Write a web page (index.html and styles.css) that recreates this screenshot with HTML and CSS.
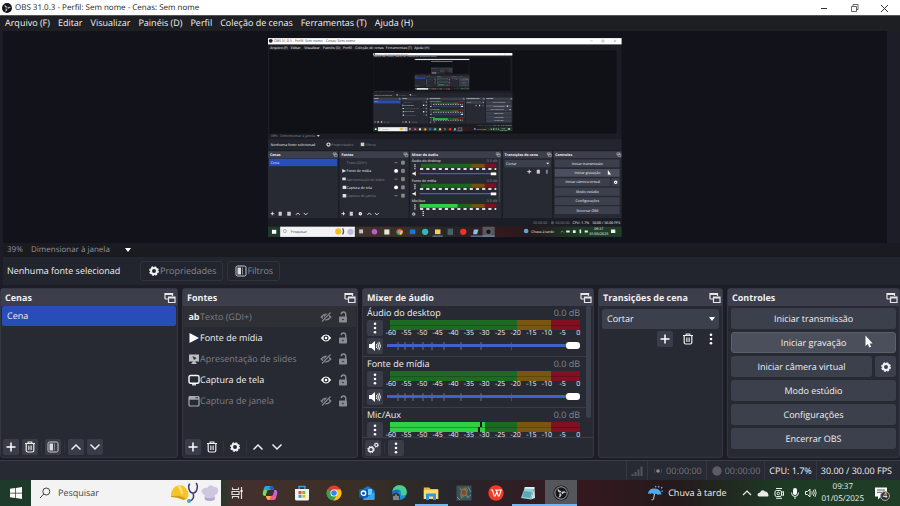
FILE: index.html
```html
<!DOCTYPE html>
<html lang="pt-BR">
<head>
<meta charset="UTF-8" />
<meta name="viewport" content="width=device-width, initial-scale=1" />
<title>OBS 31.0.3</title>
<link rel="stylesheet" href="styles.css">
</head>
<body>

<!-- icon sprites -->
<svg class="sprites" aria-hidden="true">
  <defs>
    <symbol id="obs" viewBox="0 0 16 16">
      <circle cx="8" cy="8" r="7.6" fill="#15151a"/>
      <circle cx="8" cy="8" r="6.2" fill="none" stroke="#c9c9cd" stroke-width=".8"/>
      <path d="M7.6 7.7C5 7.500 4 5.500 5.200 3.300c.2 2 1.600 2.500 3 2.800zM8.300 7.500c1.500-2 3.800-1.600 4.900.4-1.800-.7-2.900.2-3.800 1.300zM8 8.400c1.100 2.300-.3 4-2.700 4 1.500-1.100 1.300-2.400.8-3.800z" fill="#c9c9cd"/>
    </symbol>
    <symbol id="obs-small" viewBox="0 0 12 12">
      <circle cx="6" cy="6" r="5" fill="#15151a"/>
      <path d="M5.500 5.800C3.800 5.500 3 4 4 2.200c.3 1.700 1.300 2 2.400 2.300zM6.300 5.600c1.200-1.500 2.800-1 3.600.5-1.500-.5-2.200.2-2.800 1zM6 6.500c.8 1.800-.5 3.200-2.300 3 1.200-.8 1-1.700.7-2.700z" fill="#b5b5ba"/>
    </symbol>
    <symbol id="popout" viewBox="0 0 12 12">
      <path d="M1 7V1.500h7.500V4M1 2.300h7.500M1 7h3" fill="none" stroke="#e6e6ea" stroke-width="1.200"/>
      <path d="M4.500 5h6.500v5.500H4.500zM4.500 6h6.500" fill="none" stroke="#e6e6ea" stroke-width="1.200"/>
    </symbol>
    <symbol id="plus" viewBox="0 0 12 12"><path d="M6 1.500v9M1.500 6h9" stroke="#fff" stroke-width="1.500"/></symbol>
    <symbol id="trash" viewBox="0 0 12 12">
      <path d="M1 2.500h10M4.200 2.300V1h3.600v1.300M2.200 3v6.500q0 1.500 1.500 1.500h4.600q1.500 0 1.500-1.500V3" fill="none" stroke="#eee" stroke-width="1.200"/>
      <path d="M4.600 4.500v4.500M6 4.500v4.500M7.400 4.500v4.500" stroke="#eee" stroke-width=".8"/>
    </symbol>
    <symbol id="filter" viewBox="0 0 12 12">
      <rect x="1" y="1" width="10" height="10" rx="1.500" fill="none" stroke="#c8c8ce" stroke-width="1"/>
      <path d="M2.500 2.500h3.500v7H2.500z" fill="#dcdce0"/>
      <path d="M7 2.500h1v7H7z" fill="#85858d"/>
    </symbol>
    <symbol id="up" viewBox="0 0 12 12"><path d="M1.500 8.500L6 4l4.500 4.500" fill="none" stroke="#eee" stroke-width="1.500"/></symbol>
    <symbol id="down" viewBox="0 0 12 12"><path d="M1.500 3.500L6 8l4.500-4.500" fill="none" stroke="#eee" stroke-width="1.500"/></symbol>
    <symbol id="gear" viewBox="0 0 12 12">
      <circle cx="6" cy="6" r="3" fill="none" stroke="#f0f0f2" stroke-width="2"/>
      <circle cx="6" cy="6" r="4.200" fill="none" stroke="#f0f0f2" stroke-width="1.400" stroke-dasharray="1.900 1.399"/>
    </symbol>
    <symbol id="gears" viewBox="0 0 12 12">
      <circle cx="4" cy="7.500" r="2.300" fill="none" stroke="#f0f0f2" stroke-width="1.400"/>
      <circle cx="4" cy="7.500" r="3.300" fill="none" stroke="#f0f0f2" stroke-width="1" stroke-dasharray="1.300 1.290"/>
      <circle cx="9.300" cy="3" r="1.500" fill="none" stroke="#f0f0f2" stroke-width="1.200"/>
      <circle cx="9.300" cy="3" r="2.200" fill="none" stroke="#f0f0f2" stroke-width=".8" stroke-dasharray=".9 .828"/>
    </symbol>
    <symbol id="dots" viewBox="0 0 12 12"><circle cx="6" cy="1.800" r="1.300" fill="#fff"/><circle cx="6" cy="6" r="1.300" fill="#fff"/><circle cx="6" cy="10.200" r="1.300" fill="#fff"/></symbol>
    <symbol id="speaker" viewBox="0 0 12 12">
      <path d="M0 4h2.500L6 1v10L2.500 8H0z" fill="#fff"/>
      <path d="M7.300 4q1.300 2 0 4M8.600 2.800q2.300 3.200 0 6.400M10 1.800q3 4.200 0 8.400" fill="none" stroke="#fff" stroke-width=".9"/>
    </symbol>
    <symbol id="eye" viewBox="0 0 12 12">
      <path d="M.8 6Q6-.8 11.200 6 6 12.800.8 6z" fill="#fff"/>
      <circle cx="6" cy="6" r="2.500" fill="#272a33"/><circle cx="6" cy="6" r="1.300" fill="#fff"/>
    </symbol>
    <symbol id="eye-off" viewBox="0 0 12 12">
      <path d="M1.300 6Q6 .2 10.700 6 6 11.800 1.300 6z" fill="none" stroke="#85868c" stroke-width="1.400"/>
      <path d="M4.500 6.800a1.800 1.800 0 0 1 2-2.500" fill="none" stroke="#85868c" stroke-width="1.400"/>
      <path d="M1.500 10.800L10.500 1.200" stroke="#272a33" stroke-width="2.500"/><path d="M2 10.500L10.500 1.500" stroke="#85868c" stroke-width="1.200"/>
    </symbol>
    <symbol id="lock" viewBox="0 0 12 12">
      <rect x="2" y="5.500" width="8" height="6" rx=".8" fill="#8b8c91"/>
      <path d="M4.300 3.300Q4.300 1 6.500 1t2.200 2.300V6" fill="none" stroke="#8b8c91" stroke-width="1.400"/>
      <circle cx="6" cy="8.500" r=".8" fill="#272a33"/>
    </symbol>
    <symbol id="play" viewBox="0 0 12 12"><path d="M1.500 1L11 6l-9.500 5z" fill="#fff"/></symbol>
    <symbol id="slides" viewBox="0 0 12 12"><path d="M1 1.500h10v7H7l2 2.500H3l2-2.500H1z" fill="#bcbdc2"/><path d="M4.500 3l4 2-2.500 2z" fill="#272a33"/></symbol>
    <symbol id="monitor" viewBox="0 0 12 12"><rect x="1" y="1.500" width="10" height="7.800" rx="1.500" fill="none" stroke="#fff" stroke-width="1.400"/><path d="M4 10.800h4" stroke="#fff" stroke-width="1.200"/></symbol>
    <symbol id="window" viewBox="0 0 12 12"><rect x="1" y="1.500" width="10" height="9.500" rx="1" fill="none" stroke="#a9aab0" stroke-width="1.200"/><path d="M1 1.500h10v3.200H1z" fill="#a9aab0"/><path d="M7.500 2.800h2.500" stroke="#272a33"/></symbol>

    <!-- the desktop, as the display capture sees it -->
    <g id="desktop">
      <rect width="900" height="506" fill="#1c1d24"/>
      <rect width="900" height="16" fill="#fff"/>
      <circle cx="7" cy="7" r="5" fill="#222"/>
      <text x="15" y="11" class="cap dark">OBS 31.0.3 - Perfil: Sem nome - Cenas: Sem nome</text>
      <path d="M820 7h6M850 5h5v5h-5zM880 4l6 6M886 4l-6 6" stroke="#777" fill="none"/>
      <text x="5" y="27" class="cap">Arquivo (F)</text><text x="58" y="27" class="cap">Editar</text>
      <text x="92" y="27" class="cap">Visualizar</text><text x="140" y="27" class="cap">Painéis (D)</text>
      <text x="191" y="27" class="cap">Perfil</text><text x="222" y="27" class="cap">Coleção de cenas</text>
      <text x="300" y="27" class="cap">Ferramentas (T)</text><text x="372" y="27" class="cap">Ajuda (H)</text>
      <rect x="3" y="31" width="884" height="212" fill="#101117"/>
      <rect x="0" y="257" width="900" height="28" fill="#22252d"/>
      <text x="7" y="252" class="cap dim">39%</text><text x="31" y="252" class="cap dim">Dimensionar à janela</text>
      <path d="M124 247h8l-4 4z" fill="#fff"/>
      <text x="7" y="275" class="cap">Nenhuma fonte selecionad</text>
      <circle cx="154" cy="271" r="4" fill="none" stroke="#ddd" stroke-width="3"/><text x="161" y="275" class="cap dim">Propriedades</text>
      <path d="M236 266h9v9h-9z" fill="#ccc"/><text x="248" y="275" class="cap dim">Filtros</text>
      <path d="M0 288h178v170H0zM182 288h176v170H182zM362 288h232v170H362zM598 288h125v170H598zM727 288h173v170H727z" fill="#272a33"/>
      <path d="M0 288h178v17H0zM182 288h176v17H182zM362 288h232v17H362zM598 288h125v17H598zM727 288h173v17H727z" fill="#3c3e4b"/>
      <text x="5" y="300" class="cap bold">Cenas</text><text x="187" y="300" class="cap bold">Fontes</text>
      <text x="366" y="300" class="cap bold">Mixer de áudio</text><text x="602" y="300" class="cap bold">Transições de cena</text>
      <text x="731" y="300" class="cap bold">Controles</text>
      <path d="M166 292h7v5h-7zM169 295h7v6h-7zM346 292h7v5h-7zM349 295h7v6h-7zM581 292h7v5h-7zM584 295h7v6h-7zM711 292h7v5h-7zM714 295h7v6h-7zM888 292h7v5h-7zM891 295h7v6h-7z" fill="none" stroke="#eee"/>
      <rect x="3" y="307" width="173" height="19" fill="#284cb8"/>
      <text x="7" y="320" class="cap">Cena</text>
      <text x="200" y="321" class="cap dim">Texto (GDI+)</text><text x="200" y="342" class="cap">Fonte de mídia</text>
      <text x="200" y="363" class="cap dim">Apresentação de slides</text><text x="200" y="384" class="cap">Captura de tela</text>
      <text x="200" y="405" class="cap dim">Captura de janela</text>
      <path d="M189 333l10 5-10 5zM189 355h9v7h-9zM190 376h9v8h-9zM190 397h9v9h-9z" fill="#ddd"/>
      <path d="M322 317h8M322 359h8M322 401h8M340 313h7v8h-7zM340 334h7v8h-7zM340 355h7v8h-7zM340 376h7v8h-7zM340 397h7v8h-7z" fill="#888" stroke="#888" stroke-width="2"/>
      <circle cx="326" cy="338" r="5" fill="#fff"/><circle cx="326" cy="380" r="5" fill="#fff"/>
      <g id="cap-track">
        <text x="366" y="316" class="cap">Áudio do desktop</text><text x="557" y="316" class="cap dim">0.0 dB</text>
        <path d="M389 320h128v10H389z" fill="#1c6420"/><path d="M517 320h35v10h-35z" fill="#73520f"/><path d="M552 320h29v10h-29z" fill="#7c0f21"/>
        <path d="M387 333h194" stroke="#ddd" stroke-width="5" stroke-dasharray="8 7.800"/>
        <path d="M386 345h182" stroke="#3d62c9" stroke-width="3"/><rect x="567" y="342" width="14" height="7" fill="#fff"/>
        <path d="M374 321v13" stroke="#fff" stroke-width="3" stroke-dasharray="3 2"/><path d="M368 343h4l4-4v12l-4-4h-4z" fill="#fff"/>
      </g>
      <text x="366" y="367" class="cap">Fonte de mídia</text><text x="557" y="367" class="cap dim">0.0 dB</text>
      <path d="M389 371h128v10H389z" fill="#1c6420"/><path d="M517 371h35v10h-35zM517 422h35v10h-35z" fill="#73520f"/><path d="M552 371h29v10h-29zM552 422h29v10h-29z" fill="#7c0f21"/>
      <path d="M387 384h194M387 435h194" stroke="#ddd" stroke-width="5" stroke-dasharray="8 7.800"/>
      <path d="M386 396h182" stroke="#3d62c9" stroke-width="3"/><rect x="567" y="393" width="14" height="7" fill="#fff"/>
      <path d="M374 372v13M374 423v13M395 440v13" stroke="#fff" stroke-width="3" stroke-dasharray="3 2"/><path d="M368 394h4l4-4v12l-4-4h-4z" fill="#fff"/>
      <text x="366" y="418" class="cap">Mic/Aux</text><text x="557" y="418" class="cap dim">0.0 dB</text>
      <path d="M386 422h97v10h-97z" fill="#2fd046"/><path d="M483 422h34v10h-34z" fill="#1c6420"/>
      <path d="M587 307h4v110h-4z" fill="#3c404d"/>
      <path d="M602 310h117v19H602zM730 309h165v20H730zM730 357h141v20H730zM874 357h21v20h-21zM730 381h165v20H730zM730 405h165v20H730zM730 428h165v20H730z" fill="#3c404d"/>
      <path d="M730 333h165v20H730z" fill="#4b4f5d"/>
      <text x="606" y="323" class="cap">Cortar</text><path d="M708 317h8l-4 4z" fill="#fff"/>
      <path d="M665 335v10M660 340h10M710 335v10" stroke="#fff" stroke-width="2"/><path d="M684 335h8v10h-8z" fill="#ccc"/>
      <text x="813" y="323" class="cap mid">Iniciar transmissão</text><text x="813" y="347" class="cap mid">Iniciar gravação</text>
      <text x="801" y="370" class="cap mid">Iniciar câmera virtual</text><text x="813" y="395" class="cap mid">Modo estúdio</text>
      <text x="813" y="418" class="cap mid">Configurações</text><text x="813" y="442" class="cap mid">Encerrar OBS</text>
      <circle cx="885" cy="367" r="3" fill="none" stroke="#fff" stroke-width="3"/>
      <path d="M865 336v13l3-3 3 4 1-5z" fill="#fff"/>
      <path d="M7 447h9M11 442v9M187 447h9M192 442v9M71 450l5-5 5 5M91 445l5 5 5-5M253 450l5-5 5 5M272 445l5 5 5-5" fill="none" stroke="#fff" stroke-width="2"/>
      <path d="M27 442h8v10h-8zM49 442h9v10h-9zM208 442h8v10h-8z" fill="#ccc"/>
      <circle cx="235" cy="447" r="3" fill="none" stroke="#fff" stroke-width="3"/><circle cx="371" cy="448" r="3" fill="none" stroke="#fff" stroke-width="2"/>
      <circle cx="724" cy="470" r="4" fill="#555"/>
      <text x="675" y="473" class="cap dim">00:00:00</text><text x="732" y="473" class="cap dim">00:00:00</text>
      <text x="775" y="473" class="cap">CPU: 1.7%</text><text x="825" y="473" class="cap">30.00 / 30.00 FPS</text>
      <rect y="480" width="900" height="26" fill="url(#bar)"/>
      <rect x="31" y="480" width="190" height="26" fill="#f3f3f3"/><rect x="10" y="488" width="11" height="10" fill="#fff"/>
      <text x="58" y="496" class="cap dark">Pesquisar</text>
      <circle cx="43" cy="491" r="4" fill="none" stroke="#555"/>
      <circle cx="179" cy="492" r="8" fill="#f3c022"/><path d="M190 484q5 8 0 16" fill="none" stroke="#5a4a8a" stroke-width="3"/><circle cx="210" cy="493" r="8" fill="#c5bcdc"/>
      <path d="M232 487h10v10h-10z" fill="#c8c4c4"/><circle cx="271" cy="493" r="7" fill="#bd5ec5"/><path d="M296 487h13v13h-13z" fill="#e5e5da"/>
      <circle cx="335" cy="493" r="8" fill="#e34b36"/><path d="M335 493l7-4a8 8 0 0 1-7 12z" fill="#fbc116"/><path d="M335 493v8a8 8 0 0 1-7-12z" fill="#2da44e"/><circle cx="335" cy="493" r="3" fill="#4a8df0" stroke="#fff"/><path d="M361 487h14v12h-14z" fill="#1877d2"/>
      <circle cx="400" cy="493" r="8" fill="#2cbcc0"/><path d="M425 487h14v12h-14z" fill="#f6cd56"/><path d="M457 485h14v16h-14z" fill="#466267"/>
      <circle cx="497" cy="493" r="8" fill="#f03424"/><path d="M524 487h12l-4 12h-10z" fill="#87c7cf"/>
      <path d="M546 480h31v26h-31z" fill="#55565c"/><circle cx="561" cy="493" r="7" fill="#17171a" stroke="#bbb"/>
      <path d="M419 504h26M516 504h61" stroke="#7ab4ec" stroke-width="2"/>
      <circle cx="657" cy="491" r="6" fill="#58a6e0"/>
      <text x="670" y="496" class="cap">Chuva à tarde</text><text x="842" y="489" class="cap mid">09:37</text><text x="842" y="502" class="cap mid">01/05/2025</text>
      <path d="M745 495l4-4 4 4" fill="none" stroke="#eee"/><path d="M759 490h9v5h-9zM776 489h7v7h-7zM793 487h4v10h-4zM806 490h8v5h-8zM873 487h11v9h-11z" fill="#eee"/>
    </g>
    <linearGradient id="bar">
      <stop offset="0" stop-color="#1d3a2b"/><stop offset=".24" stop-color="#1f3628"/><stop offset=".26" stop-color="#43302e"/>
      <stop offset=".4" stop-color="#382f26"/><stop offset=".5" stop-color="#27262b"/><stop offset=".64" stop-color="#35191f"/>
      <stop offset=".75" stop-color="#24191c"/><stop offset=".87" stop-color="#1d3a24"/><stop offset="1" stop-color="#1f3d27"/>
    </linearGradient>
  </defs>
</svg>

<header class="titlebar">
  <svg class="icon"><use href="#obs-small"/></svg>
  <h1>OBS 31.0.3 - Perfil: Sem nome - Cenas: Sem nome</h1>
  <div class="window-buttons">
    <button aria-label="Minimizar"><svg viewBox="0 0 10 10"><path d="M2 5.500h6" stroke="#333"/></svg></button>
    <button aria-label="Restaurar"><svg viewBox="0 0 10 10"><path d="M2.500 3.500h5v5h-5zM4 3.500v-2h5v5H7.500" fill="none" stroke="#444" stroke-width=".8"/></svg></button>
    <button aria-label="Fechar"><svg viewBox="0 0 10 10"><path d="M2 2l7 7M9 2L2 9" stroke="#333"/></svg></button>
  </div>
</header>

<nav class="menubar">
  <a href="#">Arquivo (F)</a>
  <a href="#">Editar</a>
  <a href="#">Visualizar</a>
  <a href="#">Painéis (D)</a>
  <a href="#">Perfil</a>
  <a href="#">Coleção de cenas</a>
  <a href="#">Ferramentas (T)</a>
  <a href="#">Ajuda (H)</a>
</nav>

<main class="preview">
  <svg viewBox="0 0 900 506" role="img" aria-label="Captura de tela">
    <use href="#desktop"/>
    <g transform="translate(268 38) scale(.3933)">
      <use href="#desktop"/>
      <g transform="translate(268 38) scale(.3933)">
        <use href="#desktop"/>
        <use href="#desktop" transform="translate(268 38) scale(.3933)"/>
      </g>
    </g>
  </svg>
</main>

<div class="scalebar">
  <span class="percent">39%</span>
  <select aria-label="Escala da prévia"><option>Dimensionar à janela</option></select>
</div>

<div class="source-toolbar">
  <span class="selected-source">Nenhuma fonte selecionad</span>
  <button class="tool"><svg class="icon"><use href="#gear"/></svg>Propriedades</button>
  <button class="tool"><svg class="icon"><use href="#filter"/></svg>Filtros</button>
</div>

<div class="docks">
  <section class="dock">
    <header><h2>Cenas</h2><button class="popout" aria-label="Destacar Cenas"><svg class="icon"><use href="#popout"/></svg></button></header>
    <ul class="scenes">
      <li class="active">Cena</li>
    </ul>
    <footer>
      <button class="small filled" aria-label="Adicionar cena"><svg class="icon"><use href="#plus"/></svg></button>
      <button class="small filled" aria-label="Remover cena"><svg class="icon"><use href="#trash"/></svg></button>
      <i class="divider"></i>
      <button class="small filled" aria-label="Filtros da cena"><svg class="icon"><use href="#filter"/></svg></button>
      <i class="divider"></i>
      <button class="small filled" aria-label="Mover cena para cima"><svg class="icon"><use href="#up"/></svg></button>
      <button class="small filled" aria-label="Mover cena para baixo"><svg class="icon"><use href="#down"/></svg></button>
    </footer>
  </section>

  <section class="dock">
    <header><h2>Fontes</h2><button class="popout" aria-label="Destacar Fontes"><svg class="icon"><use href="#popout"/></svg></button></header>
    <ul class="sources">
      <li class="off hover"><b class="ab">ab</b><span>Texto (GDI+)</span>
        <button aria-label="Mostrar"><svg class="icon"><use href="#eye-off"/></svg></button><button aria-label="Travar"><svg class="icon"><use href="#lock"/></svg></button></li>
      <li><svg class="icon"><use href="#play"/></svg><span>Fonte de mídia</span>
        <button aria-label="Ocultar"><svg class="icon"><use href="#eye"/></svg></button><button aria-label="Travar"><svg class="icon"><use href="#lock"/></svg></button></li>
      <li class="off"><svg class="icon"><use href="#slides"/></svg><span>Apresentação de slides</span>
        <button aria-label="Mostrar"><svg class="icon"><use href="#eye-off"/></svg></button><button aria-label="Travar"><svg class="icon"><use href="#lock"/></svg></button></li>
      <li><svg class="icon"><use href="#monitor"/></svg><span>Captura de tela</span>
        <button aria-label="Ocultar"><svg class="icon"><use href="#eye"/></svg></button><button aria-label="Travar"><svg class="icon"><use href="#lock"/></svg></button></li>
      <li class="off"><svg class="icon"><use href="#window"/></svg><span>Captura de janela</span>
        <button aria-label="Mostrar"><svg class="icon"><use href="#eye-off"/></svg></button><button aria-label="Travar"><svg class="icon"><use href="#lock"/></svg></button></li>
    </ul>
    <footer>
      <button class="small filled" aria-label="Adicionar fonte"><svg class="icon"><use href="#plus"/></svg></button>
      <button class="small" aria-label="Remover fonte"><svg class="icon"><use href="#trash"/></svg></button>
      <i class="divider"></i>
      <button class="small" aria-label="Propriedades da fonte"><svg class="icon"><use href="#gear"/></svg></button>
      <i class="divider"></i>
      <button class="small" aria-label="Mover fonte para cima"><svg class="icon"><use href="#up"/></svg></button>
      <button class="small" aria-label="Mover fonte para baixo"><svg class="icon"><use href="#down"/></svg></button>
    </footer>
  </section>

  <section class="dock">
    <header><h2>Mixer de áudio</h2><button class="popout" aria-label="Destacar Mixer"><svg class="icon"><use href="#popout"/></svg></button></header>
    <div class="mixer">
      <div class="channels">
        <div class="channel">
          <div class="channel-name"><label for="vol1">Áudio do desktop</label><output>0.0 dB</output></div>
          <div class="channel-body">
            <div class="channel-buttons">
              <button class="small filled" aria-label="Opções"><svg class="icon"><use href="#dots"/></svg></button>
              <button class="small filled" aria-label="Mudo"><svg class="icon"><use href="#speaker"/></svg></button>
            </div>
            <div class="levels">
              <div class="meter"></div>
              <div class="scale"><span>-60</span><span>-55</span><span>-50</span><span>-45</span><span>-40</span><span>-35</span><span>-30</span><span>-25</span><span>-20</span><span>-15</span><span>-10</span><span>-5</span><span>0</span></div>
              <input type="range" id="vol1" value="100">
            </div>
          </div>
        </div>
        <div class="channel">
          <div class="channel-name"><label for="vol2">Fonte de mídia</label><output>0.0 dB</output></div>
          <div class="channel-body">
            <div class="channel-buttons">
              <button class="small filled" aria-label="Opções"><svg class="icon"><use href="#dots"/></svg></button>
              <button class="small filled" aria-label="Mudo"><svg class="icon"><use href="#speaker"/></svg></button>
            </div>
            <div class="levels">
              <div class="meter"></div>
              <div class="scale"><span>-60</span><span>-55</span><span>-50</span><span>-45</span><span>-40</span><span>-35</span><span>-30</span><span>-25</span><span>-20</span><span>-15</span><span>-10</span><span>-5</span><span>0</span></div>
              <input type="range" id="vol2" value="100">
            </div>
          </div>
        </div>
        <div class="channel">
          <div class="channel-name"><label for="vol3">Mic/Aux</label><output>0.0 dB</output></div>
          <div class="channel-body">
            <div class="channel-buttons">
              <button class="small filled" aria-label="Opções"><svg class="icon"><use href="#dots"/></svg></button>
              <button class="small filled" aria-label="Mudo"><svg class="icon"><use href="#speaker"/></svg></button>
            </div>
            <div class="levels">
              <div class="meter"><div class="level" style="width: 50%"></div></div>
              <div class="scale"><span>-60</span><span>-55</span><span>-50</span><span>-45</span><span>-40</span><span>-35</span><span>-30</span><span>-25</span><span>-20</span><span>-15</span><span>-10</span><span>-5</span><span>0</span></div>
              <input type="range" id="vol3" value="100">
            </div>
          </div>
        </div>
      </div>
      <div class="scrollbar"></div>
    </div>
    <footer class="lined">
      <button class="small filled" aria-label="Propriedades de áudio"><svg class="icon"><use href="#gears"/></svg></button>
      <i class="divider"></i>
      <button class="small filled" aria-label="Menu do mixer"><svg class="icon"><use href="#dots"/></svg></button>
    </footer>
  </section>

  <section class="dock">
    <header><h2>Transições de cena</h2><button class="popout" aria-label="Destacar Transições"><svg class="icon"><use href="#popout"/></svg></button></header>
    <div class="transitions">
      <select aria-label="Transição"><option>Cortar</option></select>
      <div class="transition-buttons">
        <button class="small filled" aria-label="Adicionar transição"><svg class="icon"><use href="#plus"/></svg></button>
        <button class="small" aria-label="Remover transição"><svg class="icon"><use href="#trash"/></svg></button>
        <button class="small" aria-label="Opções da transição"><svg class="icon"><use href="#dots"/></svg></button>
      </div>
    </div>
  </section>

  <section class="dock">
    <header><h2>Controles</h2><button class="popout" aria-label="Destacar Controles"><svg class="icon"><use href="#popout"/></svg></button></header>
    <div class="controls">
      <button>Iniciar transmissão</button>
      <button class="hover">Iniciar gravação
        <svg class="cursor" viewBox="0 0 8 13"><path d="M.5.500v10.500l2.300-2 1.600 3.500 1.700-.8-1.500-3.200h3z" fill="#fff"/></svg>
      </button>
      <div class="split"><button>Iniciar câmera virtual</button><button aria-label="Configurar câmera virtual"><svg class="icon"><use href="#gear"/></svg></button></div>
      <button>Modo estúdio</button>
      <button>Configurações</button>
      <button>Encerrar OBS</button>
    </div>
  </section>
</div>

<div class="statusbar">
  <span><svg class="icon" viewBox="0 0 12 12"><path d="M1.500 9v2M4.500 7v4M7.500 4.500V11M10.500 1.500V11" stroke="#55575f" stroke-width="2"/></svg></span>
  <span class="idle"><svg class="icon" viewBox="0 0 12 12"><circle cx="6" cy="6" r="1.800" fill="#888a90"/><path d="M3 3.500q-1.500 2.500 0 5M9 3.500q1.500 2.500 0 5" fill="none" stroke="#44464e"/></svg>00:00:00</span>
  <span class="idle"><svg class="icon" viewBox="0 0 12 12"><circle cx="6" cy="6" r="4.700" fill="#5c5d64"/></svg>00:00:00</span>
  <span>CPU: 1.7%</span>
  <span>30.00 / 30.00 FPS</span>
</div>

<div class="taskbar">
  <button class="start" aria-label="Iniciar"><svg viewBox="0 0 12 12"><path d="M0 1.800L5.300 1v4.700H0zM6 .9L12 0v5.700H6zM0 6.400h5.300v4.700L0 10.300zM6 6.400h6V12l-6-.9z" fill="#fff"/></svg></button>
  <div class="search">
    <svg class="lens" viewBox="0 0 12 12"><circle cx="7.300" cy="4.500" r="3.500" fill="none" stroke="#444"/><path d="M4.800 7L1 11" stroke="#444"/></svg>
    <input type="text" placeholder="Pesquisar" aria-label="Pesquisar">
    <svg class="doodle" viewBox="0 0 48 22">
      <path d="M0 14Q0 4 9 3q8 1 8.500 11l-2 3Q8 12 0 14z" fill="#f5c425"/><path d="M6 4l3-1q3 4 3 9l-2 0q-1-5-4-8z" fill="#ffe17a"/><path d="M0 14q9-2 15.500 3l-3 1Q6 15 0 15z" fill="#d69b10"/>
      <path d="M19 2q-2 1-1 5 1 4 4 4t4-4q1-4-1-6M22 11q2 6-3 8" fill="none" stroke="#423a78" stroke-width="1.500"/><circle cx="18" cy="19" r="2" fill="#4aa5bd"/>
      <path d="M32 12q-3-3 0-5 2-2 4-1 3-5 7-1 5 0 4 5-1 3-3 3l-.5 4q-5 2.500-9.500 0l-.5-4z" fill="#cfc7e2"/><path d="M33.500 15q5 2.500 10.500 0l-.5 3q-5 2-9.500 0z" fill="#b4a9cc"/>
    </svg>
  </div>
  <div class="apps">
    <button aria-label="Visão de tarefas"><svg viewBox="0 0 16 16"><path d="M3.500 2.500v2h6v-2M3.500 13.500v-2h6v2M3 6.500h7v3H3zM12.500 2v12" fill="none" stroke="#ddd" stroke-width="1.200"/><path d="M11.500 5h2v2h-2z" fill="#fff"/></svg></button>
    <button aria-label="Copilot"><svg viewBox="0 0 16 16"><path d="M4 1h5q2 0 2.500 2l.5 2H7Q5 5 4.500 7L3.500 11Q0 11 1 7l1-4Q2.500 1 4 1z" fill="#25a5e8"/><path d="M1 7l1-2q3-1 3 1l-1.500 5Q0 11 1 7z" fill="#8bd448"/><path d="M9 1q2 0 2.500 2l.7 2h-3L7 3z" fill="#3451cf"/><path d="M12 15H7q-2 0-2.500-2L4 11h5q2 0 2.500-2l1-4Q16 5 15 9l-1 4q-.5 2-2 2z" fill="#ee5b9b"/><path d="M4 11h5l-2 4q-2 0-2.500-2z" fill="#ffb23c"/><path d="M12.500 5Q16 5 15 9l-1 1q-2 0-2.500-1z" fill="#b369e8"/></svg></button>
    <button aria-label="Microsoft Store"><svg viewBox="0 0 16 16"><path d="M5 4V1.500h6V4" fill="none" stroke="#37a4df" stroke-width="1.400"/><path d="M1 4h14v10q0 1.500-1.500 1.500h-11Q1 15.500 1 14z" fill="#f2f2ee"/><path d="M4.500 6h3v3h-3z" fill="#e8502b"/><path d="M8.300 6h3v3h-3z" fill="#7db82c"/><path d="M4.500 9.800h3v3h-3z" fill="#2c9be0"/><path d="M8.300 9.800h3v3h-3z" fill="#f4b61c"/></svg></button>
    <button aria-label="Chrome"><svg viewBox="0 0 16 16"><circle cx="8" cy="8" r="7.500" fill="#e33b2e"/><path d="M8 8L1.500 4.200A7.500 7.500 0 0 0 7.500 15.500L11 9z" fill="#2da44e"/><path d="M8 4.500h6.600A7.500 7.500 0 0 1 7.500 15.500L11 10z" fill="#fbc116"/><circle cx="8" cy="8" r="3.600" fill="#fff"/><circle cx="8" cy="8" r="2.800" fill="#3f7fe8"/></svg></button>
    <button aria-label="Outlook"><svg viewBox="0 0 16 16"><path d="M3 4.500L9 1l6.500 4.500V14q0 1-1 1H4z" fill="#1b76cf"/><path d="M5 4h8v6H5z" fill="#6fcaf5"/><path d="M4 15l11.500-8V14q0 1-1 1z" fill="#35a7ee"/><rect y="4" width="9" height="8.500" rx="1" fill="#0c5cae"/><circle cx="4.500" cy="8.200" r="2.200" fill="none" stroke="#fff" stroke-width="1.300"/></svg></button>
    <button aria-label="Edge"><svg viewBox="0 0 16 16"><circle cx="8.500" cy="7.500" r="7.300" fill="#1b8fd2"/><path d="M1.500 6Q3 0 9 .3q6.500.5 6.800 6.700 0 3.500-3.800 3.500-2.500 0-2-1.500.8-3.500-2.500-4.500-3.500-.5-6 1.500z" fill="#48cf8d"/><path d="M1.200 7Q5 3 8.800 6q-3 1-2 5 1 3 5 3.500Q3 17 1.200 7z" fill="#1570bd"/><circle cx="5" cy="12" r="4" fill="#30343c"/><path d="M3 15v-4M5 15V9.500M7 15v-4" stroke="#d7d2cc"/></svg></button>
    <button class="open" aria-label="Explorador de Arquivos"><svg viewBox="0 0 16 16"><path d="M.8 2.500h5.500L7.500 4h7.700v10H.8z" fill="#f0b93b"/><path d="M.8 5h14.400v9H.8z" fill="#fddc75"/><path d="M3 8.500h10V15h-3v-3.500H6V15H3z" fill="#3696dc"/></svg></button>
    <button aria-label="Jogo"><svg viewBox="0 0 16 16"><path d="M.5.500h15v15H.5z" fill="#37535b"/><path d="M3 2l3 2 4-2 2 3-1 4 2 4-4-2-4 3-1-5 1-3z" fill="#757446"/><path d="M6 5l4 1-1 4-3-1z" fill="#8e3f37"/><path d="M1 12l3 3M12 2l3 5M11 13l4-3" stroke="#5d8fb5"/></svg></button>
    <button aria-label="WPS Office"><svg viewBox="0 0 16 16"><circle cx="8" cy="8" r="7.700" fill="#f23a27"/><path d="M2.800 5h1.700l1.700 6h1L9 6.500M7 5h1.500l1.700 6h1L13.200 5H9" fill="none" stroke="#fff" stroke-width="1.100"/></svg></button>
    <button class="open" aria-label="Bloco de Notas"><svg viewBox="0 0 16 16"><path d="M5 2h9.500L11 14.500 1 13z" fill="#8fd1d8"/><path d="M5 2h9.500l-.5 2-9.800-.5z" fill="#e6eef0"/><path d="M14.500 2l.5 11-4 1.500z" fill="#d7dcdc"/><path d="M4 6l8 1-2 6-7.500-1z" fill="#5ba8b5"/></svg></button>
    <button class="open current" aria-label="OBS Studio"><svg><use href="#obs"/></svg></button>
  </div>
  <div class="weather">
    <svg viewBox="0 0 16 16"><path d="M1 9Q1.500 3 8 3.500q6 .5 6.500 6.500-2-1.500-3.500 0-2-2-4-.5-2-2-3.500-.5Q2 7.800 1 9z" fill="#4da8ec"/><path d="M7.500 9L6.500 14q-.5 1.500-2 .7" fill="none" stroke="#c6d7e2"/><path d="M9 1l-.7 1.300M12 1l-.7 1.500M15 2l-.7 1.500M15.500 5.500l-.7 1.300" stroke="#64baf5" stroke-width="1.300"/></svg>
    Chuva à tarde
  </div>
  <div class="tray">
    <svg viewBox="0 0 12 12"><path d="M2 8l4-4 4 4" fill="none" stroke="#eee" stroke-width="1.200"/></svg>
    <svg viewBox="0 0 12 12"><path d="M1 9q-1.500-3 2-3.500Q5 1.500 8 4.500q3 0 3.500 4L11 9.500H2z" fill="#e9ebe9"/></svg>
    <svg viewBox="0 0 12 12"><rect x="2" y="3.500" width="6.500" height="6" rx="1.500" fill="none" stroke="#eee"/><circle cx="5.300" cy="6.500" r="1.300" fill="none" stroke="#eee"/><path d="M8.500 5.500l2-1v4l-2-1M3 1.500h6M3 11.300h6" fill="none" stroke="#eee"/></svg>
    <svg viewBox="0 0 12 12"><rect x="4" y="1" width="4" height="7" rx="2" fill="#fff"/><path d="M2.500 5.500q0 4 3.500 4t3.500-4M6 9.500V12" fill="none" stroke="#eee"/></svg>
    <svg viewBox="0 0 12 12"><path d="M.5 4.500h2l2.500-2.500v8L2.500 7.500h-2z" fill="none" stroke="#eee"/><path d="M6.800 4.300q1 1.700 0 3.400M8.300 3q2 3 0 6M9.900 2q2.600 4 0 8" fill="none" stroke="#eee" stroke-width=".9"/></svg>
  </div>
  <time class="clock">09:37<br>01/05/2025</time>
  <button class="notifications" aria-label="Notificações">
    <svg viewBox="0 0 14 14"><path d="M1 1.500h12v9H7L4 13.500v-3H1z" fill="#fff"/><path d="M3 4h8M3 6.300h8" stroke="#555"/></svg>
    <span class="badge">4</span>
  </button>
</div>

</body>
</html>
```
FILE: styles.css
```css
* {
  box-sizing: border-box;
}
body {
  margin: 0;
  min-height: 100vh;
  display: flex;
  flex-direction: column;
  background: #1c1d26;
  color: #f0f0f2;
  font: 9px/14px "Open Sans", "Noto Sans", sans-serif;
  text-rendering: geometricPrecision;
}
button, select, input {
  margin: 0;
  padding: 0;
  border: 0;
  background: none;
  color: inherit;
  font: inherit;
  text-rendering: inherit;
}
h1, h2, ul {
  margin: 0;
  padding: 0;
  font-size: inherit;
  list-style: none;
}
a {
  color: inherit;
  text-decoration: none;
}
svg {
  display: block;
  flex: none;
}
.sprites {
  position: absolute;
  width: 0;
  height: 0;
}
.icon {
  width: 12px;
  height: 12px;
}

/* text inside the captured desktop */
.cap {
  fill: #f0f0f2;
  font-size: 9px;
}
.cap.dark { fill: #333; }
.cap.dim { fill: #85868c; }
.cap.bold { font-weight: bold; }
.cap.mid { text-anchor: middle; }

.titlebar {
  display: flex;
  align-items: center;
  gap: 2px;
  height: 16px;
  padding-left: 1px;
  background: #fff;
  border-bottom: 1px solid #55565a;
  color: #222;
}
.titlebar h1 {
  flex: 1;
  font-weight: normal;
  font-size: 8px;
}
.window-buttons {
  display: flex;
  padding-right: 1px;
}
.window-buttons button {
  width: 30px;
}
.window-buttons svg {
  width: 10px;
  height: 10px;
  margin: auto;
}

.menubar {
  display: flex;
  gap: 8px;
  height: 15px;
  padding-left: 5px;
  background: #1e1f23;
}

.preview {
  flex: 1;
  min-height: 0;
  display: flex;
  justify-content: center;
  margin: 0 13px 0 3px;
  padding: 7px 0 6px;
  background: #11121a;
}
.preview svg {
  width: 40%;
}

.scalebar {
  display: flex;
  height: 14px;
  margin-left: 3px;
  background: #1a1b21;
  color: #94959b;
  font-size: 8px;
}
.percent {
  width: 24px;
  padding-left: 4px;
}
.scalebar select {
  width: 108px;
  padding-left: 4px;
}
select {
  appearance: none;
  background: url("data:image/svg+xml,%3Csvg xmlns='http://www.w3.org/2000/svg' viewBox='0 0 8 4'%3E%3Cpath d='M1 0h6L4 4z' fill='white'/%3E%3C/svg%3E") no-repeat right 3px center / 8px 4px;
}

.source-toolbar {
  display: flex;
  align-items: center;
  gap: 4px;
  height: 28px;
  margin-left: 3px;
  padding-left: 4px;
  background: #22252d;
}
.selected-source {
  width: 129px;
}
.tool {
  display: flex;
  align-items: center;
  height: 20px;
  padding: 0 6px 0 7px;
  border: 1px solid #30333d;
  border-radius: 3px;
  color: #85868c;
}

.docks {
  display: grid;
  grid-template-columns: 178fr 176fr 232fr 125fr 173fr;
  gap: 4px;
  height: 170px;
  margin: 3px 0 2px;
}
.dock {
  display: flex;
  flex-direction: column;
  min-width: 0;
  min-height: 0;
  background: #272a33;
  border: 1px solid #343741;
  border-radius: 3px;
}
.dock header {
  display: flex;
  justify-content: space-between;
  align-items: center;
  height: 17px;
  padding: 0 1px 0 4px;
  background: #3c3e4b;
}
.dock footer {
  display: flex;
  align-items: center;
  gap: 3px;
  height: 20px;
  margin-top: auto;
  padding: 0 2px;
}
.dock footer.lined {
  border-top: 1px solid #3a3d48;
}
.divider {
  width: 1px;
  height: 12px;
  background: #30333c;
}
.small {
  display: flex;
  align-items: center;
  justify-content: center;
  width: 16px;
  height: 16px;
  border-radius: 2px;
}
.small.filled {
  background: #3a3d49;
}

.scenes {
  padding: 0 1px;
}
.scenes li {
  height: 20px;
  padding-left: 5px;
  border-radius: 2px;
  line-height: 20px;
}
.scenes .active {
  background: #284cb8;
}

.sources {
  padding: 0 1px;
}
.sources li {
  display: flex;
  align-items: center;
  height: 21px;
  padding: 0 7px 0 4px;
}
.sources .hover {
  background: #2f3035;
}
.sources .off span {
  color: #7d7e84;
}
.sources span {
  flex: 1;
}
.sources button {
  margin-left: 5px;
}
.ab {
  width: 12px;
  text-align: center;
}

.mixer {
  flex: 1;
  min-height: 0;
  display: flex;
  justify-content: space-between;
  overflow: hidden;
}
.channels {
  flex: 1;
}
.channel {
  height: 51px;
  border-bottom: 1px solid #3a3d48;
  padding-left: 4px;
}
.channel-name {
  display: flex;
  justify-content: space-between;
  padding-right: 6px;
}
.channel output {
  color: #85868c;
}
.channel-body {
  display: flex;
}
.channel-buttons {
  display: grid;
  gap: 2px;
}
.levels {
  flex: 1;
}
.meter {
  height: 10px;
  margin: 0 6px 0 7px;
  background:
    linear-gradient(#0003, #0003) no-repeat 0 5px / 100% 1px,
    linear-gradient(90deg, #1d6a22 67%, #7a5710 67% 85%, #821023 85%);
}
.level {
  height: 10px;
  background:
    linear-gradient(#111, #111) no-repeat right 3px top / 2px 5px,
    linear-gradient(#111, #111) no-repeat right 5px bottom / 2px 5px,
    linear-gradient(#1b9631, #1b9631) no-repeat 0 5px / 100% 1px,
    #2fd046;
}
.scale {
  display: grid;
  grid-template-columns: repeat(13, 1fr);
  height: 8px;
  font-size: 7px;
  line-height: 8px;
  text-align: center;
}
.levels input {
  appearance: none;
  display: block;
  width: calc(100% - 10px);
  height: 14px;
  margin-left: 4px;
  background:
    linear-gradient(#3d62c9, #3d62c9) no-repeat 0 6px / 100% 3px,
    linear-gradient(90deg, transparent 5%, #4a4d58 5% 6%, transparent 6% 9%, #4a4d58 9% 10%, transparent 10% 13%, #4a4d58 13% 14%, transparent 14% 18%, #4a4d58 18% 19%, transparent 19% 23%, #4a4d58 23% 24%, transparent 24% 29%, #4a4d58 29% 30%, transparent 30% 38%, #4a4d58 38% 39%, transparent 39% 48%, #4a4d58 48% 49%, transparent 49% 64%, #4a4d58 64% 65%, transparent 65%) no-repeat 0 4px / 100% 8px;
}
.levels input::-webkit-slider-thumb {
  appearance: none;
  width: 14px;
  height: 7px;
  border-radius: 3px;
  background: #fff;
}
.scrollbar {
  width: 5px;
  height: 112px;
  margin-right: 2px;
  border-radius: 2px;
  background: #3c404d;
}

.transitions {
  padding: 3px;
}
.transitions select {
  width: 100%;
  height: 20px;
  padding-left: 5px;
  border-radius: 3px;
  background-color: #3c404d;
}
.transition-buttons {
  display: flex;
  justify-content: flex-end;
  gap: 7px;
  padding-top: 2px;
}

.controls {
  display: grid;
  gap: 3px;
  padding: 2px 3px;
}
.controls button {
  position: relative;
  height: 21px;
  border-radius: 3px;
  background: #3c404d;
}
.controls button.hover {
  background: #4b4f5c;
  border: 1px solid #5b5f6c;
}
.split {
  display: grid;
  grid-template-columns: 1fr 21px;
  gap: 3px;
}
.split .icon {
  margin: auto;
}
.cursor {
  position: absolute;
  right: 22px;
  top: 2px;
  width: 8px;
  height: 13px;
}

.statusbar {
  display: flex;
  justify-content: flex-end;
  height: 20px;
  padding-right: 4px;
  background: #272a33;
  border-top: 1px solid #3a3d48;
}
.statusbar span {
  display: flex;
  align-items: center;
  gap: 2px;
  padding: 0 4px;
  border-left: 1px solid #343741;
}
.statusbar .idle {
  color: #75767d;
}

.taskbar {
  display: flex;
  align-items: center;
  height: 26px;
  background: linear-gradient(90deg, #1d3a2b 24%, #43302e 26%, #382f26 40%, #27262b 50%, #35191f 64%, #24191c 75%, #1d3a24 87%, #1f3d27);
}
.start {
  width: 31px;
}
.start svg {
  width: 12px;
  height: 12px;
  margin: auto;
}
.search {
  display: flex;
  align-items: center;
  gap: 7px;
  width: 190px;
  height: 26px;
  padding: 0 2px 0 8px;
  background: #f3f3f3;
  color: #333;
}
.search input {
  flex: 1;
  min-width: 0;
}
.search input::placeholder {
  color: #444;
}
.lens {
  width: 12px;
  height: 12px;
}
.doodle {
  width: 48px;
  height: 22px;
}
.apps {
  display: flex;
  flex: 0 0 356px;
}
.apps button {
  flex: 1;
  height: 26px;
  border-bottom: 2px solid transparent;
}
.apps svg {
  width: 16px;
  height: 16px;
  margin: 2px auto 0;
}
.apps .open {
  border-color: #7ab4ec;
}
.apps .current {
  background: #55565c;
}
.weather {
  display: flex;
  align-items: center;
  gap: 5px;
  margin-left: auto;
}
.weather svg {
  width: 16px;
  height: 16px;
}
.tray {
  display: flex;
  gap: 4px;
  margin-left: 14px;
}
.tray svg {
  width: 12px;
  height: 12px;
}
.clock {
  margin: 0 10px 0 5px;
  font-size: 8px;
  line-height: 12px;
  text-align: center;
}
.notifications {
  position: relative;
  margin-right: 12px;
}
.notifications svg {
  width: 14px;
  height: 14px;
}
.badge {
  position: absolute;
  left: 6px;
  top: 5px;
  width: 10px;
  height: 10px;
  border: 1px solid #aaa;
  border-radius: 50%;
  background: #333;
  font-size: 8px;
  line-height: 8px;
}
```
